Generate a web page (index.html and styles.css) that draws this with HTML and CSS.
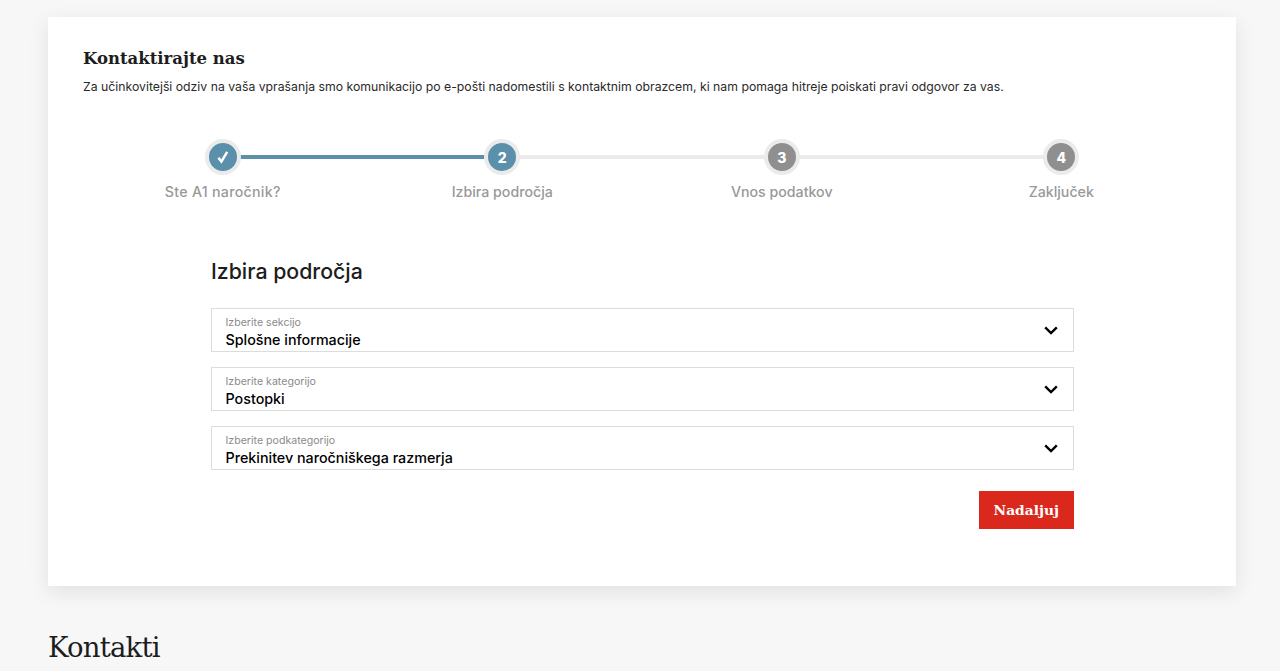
FILE: index.html
```html
<!DOCTYPE html>
<html lang="sl">
<head>
<meta charset="utf-8">
<title>Kontaktirajte nas</title>
<link rel="stylesheet" href="styles.css">
</head>
<body>
<main class="page">
  <section class="card">
    <h1 class="card-title">Kontaktirajte nas</h1>
    <p class="card-intro">Za učinkovitejši odziv na vaša vprašanja smo komunikacijo po e-pošti nadomestili s kontaktnim obrazcem, ki nam pomaga hitreje poiskati pravi odgovor za vas.</p>
    <ol class="steps">
      <li class="step done">
        <span class="step-dot"><svg class="step-check" viewBox="0 0 14 14" width="14" height="14"><path d="M2.4 7.8 5.4 11.6 11.2 1.8" fill="none" stroke="#fff" stroke-width="2.5"/></svg></span>
        <span class="step-label step-label-wide">Ste A1 naročnik?</span>
      </li>
      <li class="step active">
        <span class="step-dot">2</span>
        <span class="step-label">Izbira področja</span>
      </li>
      <li class="step">
        <span class="step-dot">3</span>
        <span class="step-label">Vnos podatkov</span>
      </li>
      <li class="step">
        <span class="step-dot">4</span>
        <span class="step-label">Zaključek</span>
      </li>
    </ol>
    <form class="form">
      <h2 class="form-title">Izbira področja</h2>
      <div class="select">
        <div class="select-text">
          <span class="select-label">Izberite sekcijo</span>
          <span class="select-value">Splošne informacije</span>
        </div>
        <svg class="chevron" viewBox="0 0 14 9" width="14" height="9"><path d="M1.2 1.4 7 7 12.8 1.4" fill="none" stroke="#000" stroke-width="2.4"/></svg>
      </div>
      <div class="select">
        <div class="select-text">
          <span class="select-label">Izberite kategorijo</span>
          <span class="select-value">Postopki</span>
        </div>
        <svg class="chevron" viewBox="0 0 14 9" width="14" height="9"><path d="M1.2 1.4 7 7 12.8 1.4" fill="none" stroke="#000" stroke-width="2.4"/></svg>
      </div>
      <div class="select">
        <div class="select-text">
          <span class="select-label">Izberite podkategorijo</span>
          <span class="select-value">Prekinitev naročniškega razmerja</span>
        </div>
        <svg class="chevron" viewBox="0 0 14 9" width="14" height="9"><path d="M1.2 1.4 7 7 12.8 1.4" fill="none" stroke="#000" stroke-width="2.4"/></svg>
      </div>
      <div class="form-actions">
        <button class="btn" type="button">Nadaljuj</button>
      </div>
    </form>
  </section>
  <h2 class="section-title">Kontakti</h2>
</main>
</body>
</html>
```
FILE: styles.css
```css
* { box-sizing: border-box; }
html, body { margin: 0; padding: 0; }
body {
  background: #f7f7f7;
  font-family: Inter, "Noto Sans", sans-serif;
  color: #1d1d1d;
  height: 671px;
  overflow: hidden;
}
.page { padding: 17px 44px 0 48px; }
.card {
  background: #fff;
  height: 569px;
  padding: 31px 35px 0;
  box-shadow: 0 6px 20px rgba(0, 0, 0, 0.09);
}
.card-title {
  margin: 0;
  font-family: "DejaVu Serif", serif;
  font-weight: 700;
  font-size: 16.5px;
  line-height: 22px;
  color: #1d1d1d;
}
.card-intro {
  margin: 8px 0 0;
  font-size: 12.25px;
  line-height: 18px;
  color: #2a2a2a;
}
.steps {
  list-style: none;
  margin: 43px 0 0;
  padding: 0;
  display: grid;
  grid-template-columns: repeat(4, 1fr);
}
.step {
  position: relative;
  display: flex;
  flex-direction: column;
  align-items: center;
}
.step::after {
  content: "";
  position: absolute;
  top: 16px;
  left: 50%;
  width: 100%;
  height: 4px;
  background: #ebebeb;
}
.step:last-child::after { display: none; }
.step.done::after { background: #5b90aa; }
.step-dot {
  position: relative;
  z-index: 1;
  width: 36px;
  height: 36px;
  border-radius: 50%;
  border: 4px solid #ebebeb;
  background: #8f8f8f;
  color: #fff;
  font-size: 14px;
  font-weight: 800;
  display: flex;
  align-items: center;
  justify-content: center;
}
.step.done .step-dot, .step.active .step-dot { background: #5b90aa; }
.step-label {
  margin-top: 7px;
  font-size: 14.2px;
  line-height: 20px;
  font-weight: 500;
  color: #999;
}
.step-label-wide { letter-spacing: 0.3px; }
.form {
  width: 862.5px;
  margin: 56px 0 0 128px;
  display: flex;
  flex-direction: column;
  gap: 15px;
}
.form-title {
  margin: 0 0 9px;
  font-size: 21.3px;
  line-height: 26px;
  font-weight: 500;
  color: #1d1d1d;
}
.select {
  height: 44px;
  border: 1px solid #dcdcdc;
  padding: 7px 13.5px 0;
  display: flex;
  justify-content: space-between;
  background: #fff;
}
.select-text { display: flex; flex-direction: column; gap: 1px; }
.select-label {
  font-size: 10.6px;
  line-height: 13px;
  color: #8a8a8a;
}
.select-value {
  font-size: 14.3px;
  line-height: 19px;
  font-weight: 500;
  color: #000;
}
.chevron { margin: 10px 1px 0 0; }
.form-actions {
  display: flex;
  justify-content: flex-end;
  margin-top: 6px;
}
.btn {
  width: 94.5px;
  height: 38px;
  border: 0;
  background: #da291c;
  color: #fff;
  font-family: "DejaVu Serif", serif;
  font-weight: 700;
  font-size: 13.8px;
  padding: 0;
}
.section-title {
  margin: 44px 0 0;
  font-family: "DejaVu Serif", serif;
  font-weight: 400;
  font-size: 27.5px;
  letter-spacing: -0.8px;
  line-height: 34px;
  color: #1d1d1d;
}
```
